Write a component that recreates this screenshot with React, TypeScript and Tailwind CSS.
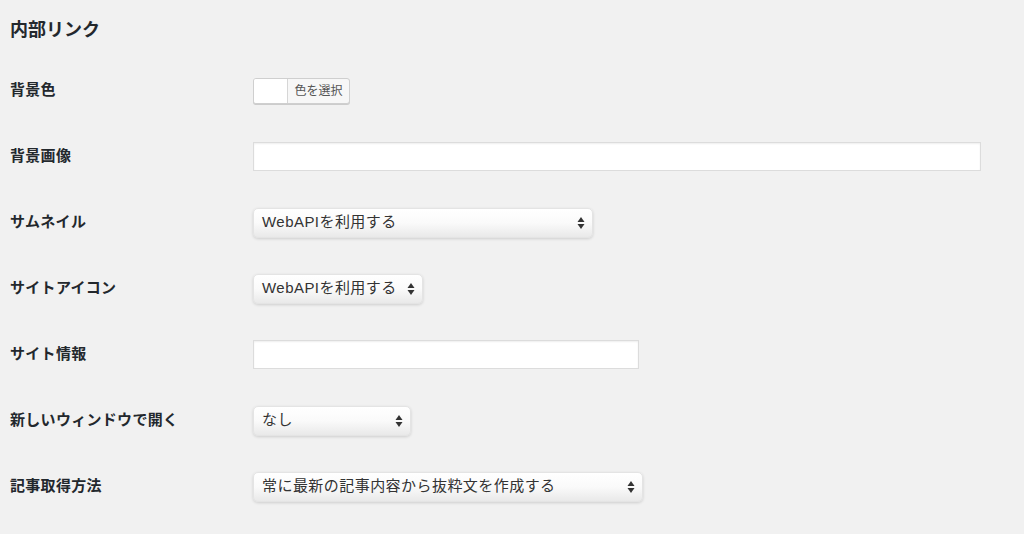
const font = { fontFamily: '"Liberation Sans", "Noto Sans CJK JP", sans-serif' }

function Arrows() {
  return (
    <svg width="8" height="14" viewBox="0 0 8 14" className="absolute right-[7px] top-1/2 -translate-y-1/2">
      <path d="M4 1 L7.5 6 L0.5 6 Z" fill="#333" />
      <path d="M4 13 L7.5 8 L0.5 8 Z" fill="#333" />
    </svg>
  )
}

function Select({ value, width }: { value: string; width: string }) {
  return (
    <div
      className={`relative ${width} h-[30px] flex items-center pl-[8px] rounded-[5px] border border-[#e4e4e4] bg-gradient-to-b from-white via-[#fafafa] to-[#e9e9e9] shadow-[0_1px_3px_rgba(0,0,0,0.15)] text-[15px] tracking-[0.45px] text-[#333]`}
    >
      {value}
      <Arrows />
    </div>
  )
}

function TextInput({ width }: { width: string }) {
  return (
    <div className={`${width} h-[29px] bg-white border border-[#dcdcdc] shadow-[inset_0_1px_2px_rgba(0,0,0,0.07)]`} />
  )
}

function ColorButton() {
  return (
    <div className="flex h-[26px] w-[97px] rounded-[3px] border border-[#cfcfcf] bg-[#f7f7f7] shadow-[0_1px_0_#ccc] overflow-hidden">
      <div className="w-[34px] bg-white border-r border-[#d6d6d6]" />
      <div className="flex-1 flex items-center justify-center text-[12px] text-[#555]">色を選択</div>
    </div>
  )
}

const rows: { label: string; control: React.ReactNode }[] = [
  { label: '背景色', control: <ColorButton /> },
  { label: '背景画像', control: <TextInput width="w-[728px]" /> },
  { label: 'サムネイル', control: <Select value="WebAPIを利用する" width="w-[340px]" /> },
  { label: 'サイトアイコン', control: <Select value="WebAPIを利用する" width="w-[170px]" /> },
  { label: 'サイト情報', control: <TextInput width="w-[386px]" /> },
  { label: '新しいウィンドウで開く', control: <Select value="なし" width="w-[158px]" /> },
  { label: '記事取得方法', control: <Select value="常に最新の記事内容から抜粋文を作成する" width="w-[390px]" /> },
]

export default function App() {
  return (
    <div className="min-h-screen bg-[#f1f1f1] pt-[10px] pl-[10px] text-[#23282d]" style={font}>
      <h2 className="h-[40px] flex items-center text-[18px] font-bold">内部リンク</h2>
      <div className="mt-[7px]">
        {rows.map((r) => (
          <div key={r.label} className="h-[66px] flex items-center">
            <div className="w-[243px] text-[15px] tracking-[0.3px] font-bold">{r.label}</div>
            <div className="pt-[1px]">{r.control}</div>
          </div>
        ))}
      </div>
    </div>
  )
}
